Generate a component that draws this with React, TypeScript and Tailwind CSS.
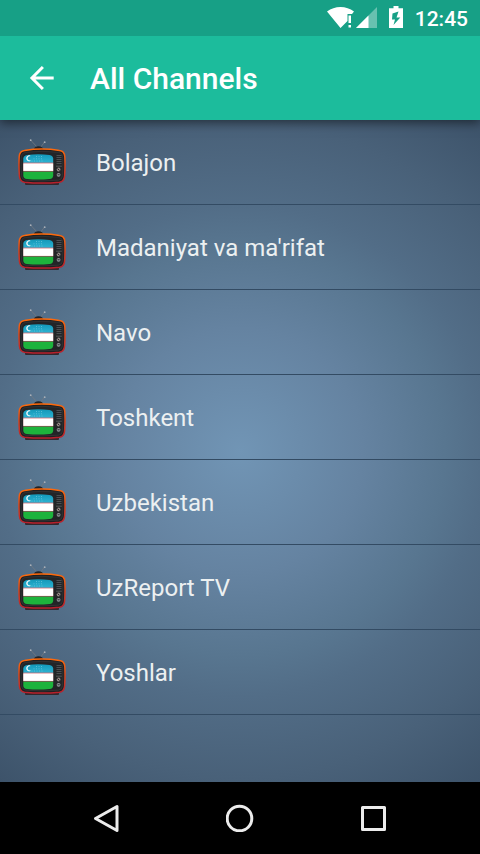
const channels = [
  "Bolajon",
  "Madaniyat va ma'rifat",
  "Navo",
  "Toshkent",
  "Uzbekistan",
  "UzReport TV",
  "Yoshlar",
];

function TvIcon() {
  return (
    <svg viewBox="0 0 48 48" className="size-12 shrink-0" aria-hidden="true">
      <defs>
        <linearGradient id="tv-rim" x1="0" y1="0" x2="0" y2="1">
          <stop offset="0" stopColor="#ff6a0a" />
          <stop offset="0.45" stopColor="#d9481c" />
          <stop offset="1" stopColor="#b81f2c" />
        </linearGradient>
        <linearGradient id="tv-sky" x1="0" y1="0" x2="0" y2="1">
          <stop offset="0" stopColor="#0f93b4" />
          <stop offset="1" stopColor="#2db4d2" />
        </linearGradient>
        <clipPath id="tv-screen">
          <path d="M9 17Q20 15.600 31.500 17Q35 17.500 35.200 20.500V37.500Q35 40.600 31.500 41Q20 42.200 9 41Q5.500 40.600 5.300 37.500V20.500Q5.500 17.500 9 17Z" />
        </clipPath>
      </defs>
      <path d="M13 2.500L19.500 9.500M26.500 4L22.500 9.500" stroke="#737980" strokeWidth="0.800" />
      <circle cx="12.700" cy="2.200" r="0.900" fill="#a9afb7" />
      <circle cx="26.700" cy="4.200" r="0.900" fill="#a9afb7" />
      <path d="M15.500 12Q16 8.500 20.500 8.300Q25 8.500 25.500 12Z" fill="#202328" />
      <path d="M7 43H41V46Q41 47 40 47H8Q7 47 7 46Z" fill="#33272e" />
      <path d="M6.500 12.400Q24 9.800 41.500 12.400Q46.400 13 46.800 18.500Q47.300 28 46.600 38Q46.100 43.500 41.500 44.200Q24 46 6.500 44.200Q1.900 43.500 1.400 38Q0.700 28 1.200 18.500Q1.600 13 6.500 12.400Z" fill="#1d1f21" stroke="url(#tv-rim)" strokeWidth="1.500" />
      <path d="M7.500 14.300Q24 12.300 40.500 14.300Q44.600 14.800 44.800 19Q45.300 28 44.600 37.500Q44.300 41.700 40.500 42.200Q24 43.800 7.500 42.200Q3.700 41.700 3.400 37.500Q2.700 28 3.200 19Q3.400 14.800 7.500 14.300Z" fill="#232527" stroke="#3c3e40" strokeWidth="0.600" />
      <g clipPath="url(#tv-screen)">
        <rect x="5" y="15" width="31" height="10" fill="url(#tv-sky)" />
        <rect x="5" y="24.600" width="31" height="9" fill="#cf6670" />
        <rect x="5" y="25.400" width="31" height="7.500" fill="#fff" />
        <rect x="5" y="33.700" width="31" height="9" fill="#1db33c" />
        <path d="M12.200 17.800A2.700 2.700 0 1 0 12.400 22.700A2.500 2.500 0 1 1 12.200 17.800Z" fill="#fff" stroke="#fff" strokeWidth="0.500" />
        <path d="M18 18.500H25M15.500 20.800H25M13.500 23H25" stroke="#7fcfe0" strokeWidth="0.600" strokeDasharray="1 1.500" />
      </g>
      <path d="M38.500 17.500H43.500M38.500 19.500H43.500M38.500 21.500H43.500M38.500 23.500H43.500M38.500 25.500H43.500" stroke="#4c4f52" strokeWidth="1.200" />
      <path d="M38 28.200H43.800" stroke="#777" strokeWidth="0.600" />
      <circle cx="40.600" cy="31.500" r="1.900" fill="#8f8583" />
      <path d="M39.500 30.500L41.500 32.500" stroke="#2b2224" />
      <circle cx="40.600" cy="36.800" r="1.900" fill="#96999c" />
      <path d="M39.500 36.800H41.700" stroke="#242629" />
    </svg>
  );
}

function StatusBar() {
  return (
    <div className="relative z-20 flex h-9 items-center justify-end bg-[#17a086] pr-3 text-white">
      <svg viewBox="0 0 50 24" className="h-6 w-[50px]" aria-label="Wi-Fi and mobile signal">
        <path d="M0 5.500Q6 1 13.500 1Q21 1 27 5.500L25 8H20.500V15L13.500 22Z" fill="currentColor" />
        <path d="M21.500 9.500H24V17H21.500ZM21.500 19H24V21.500H21.500Z" fill="currentColor" />
        <path d="M50 1V22H29Z" fill="currentColor" opacity="0.350" />
        <path d="M41.500 9.500V22H29Z" fill="currentColor" />
      </svg>
      <svg viewBox="0 0 14 24" className="ml-3 h-6 w-3.5" aria-label="Battery charging">
        <path d="M4.500 0H9.500V2.200H14V22H0V2.200H4.500ZM9.500 5.500L3.500 7.500L3 13.500H6L4.500 19L11.300 11.500H7.500Z" fill="currentColor" fillRule="evenodd" />
      </svg>
      <time className="ml-3 pt-0.5 text-[21px] leading-6 font-medium">12:45</time>
    </div>
  );
}

export default function App() {
  return (
    <div className="flex min-h-screen flex-col bg-black font-['Roboto',sans-serif]">
      <StatusBar />
      <header className="relative z-10 flex h-[84px] items-center bg-[#1cbc9c] text-white shadow-[0_3px_10px_rgba(0,0,0,0.5)]">
        <button type="button" aria-label="Back" className="flex size-[84px] items-center justify-center">
          <svg viewBox="0 0 24 24" className="size-9" fill="none" stroke="currentColor" strokeWidth="2" aria-hidden="true">
            <path d="M19.800 12H5.500M12.600 4.700L5.300 12L12.600 19.300" />
          </svg>
        </button>
        <h1 className="ml-1.5 pt-0.5 text-[30px] leading-9 font-medium">All Channels</h1>
      </header>
      <main className="flex-1 bg-[radial-gradient(circle_at_center,#7195b5_0%,#6583a1_30%,#587690_50%,#526d87_60%,#496179_80%,#3d536a_100%)]">
        <ul>
          {channels.map((name) => (
            <li key={name} className="border-b border-[#334b63]">
              <button type="button" className="flex h-[84px] w-full items-center gap-[30px] px-[18px] text-left">
                <TvIcon />
                <span className="pt-0.5 text-2xl text-[#ecf0f1]">{name}</span>
              </button>
            </li>
          ))}
        </ul>
      </main>
      <nav className="grid h-[72px] grid-cols-3 bg-black px-10 text-[#ececec]">
        <button type="button" aria-label="Back" className="flex items-center justify-center">
          <svg viewBox="0 0 28 28" className="size-7" fill="none" stroke="currentColor" strokeWidth="3" strokeLinejoin="round" aria-hidden="true">
            <path d="M24 2.500V26.500L2.500 14.500Z" />
          </svg>
        </button>
        <button type="button" aria-label="Home" className="flex items-center justify-center">
          <svg viewBox="0 0 28 28" className="size-7" fill="none" stroke="currentColor" strokeWidth="3" aria-hidden="true">
            <circle cx="13.500" cy="14.500" r="12.300" />
          </svg>
        </button>
        <button type="button" aria-label="Recent apps" className="flex items-center justify-center">
          <svg viewBox="0 0 28 28" className="size-7" fill="none" stroke="currentColor" strokeWidth="3" strokeLinejoin="round" aria-hidden="true">
            <path d="M3.500 3.500H25.500V25.500H3.500Z" />
          </svg>
        </button>
      </nav>
    </div>
  );
}
